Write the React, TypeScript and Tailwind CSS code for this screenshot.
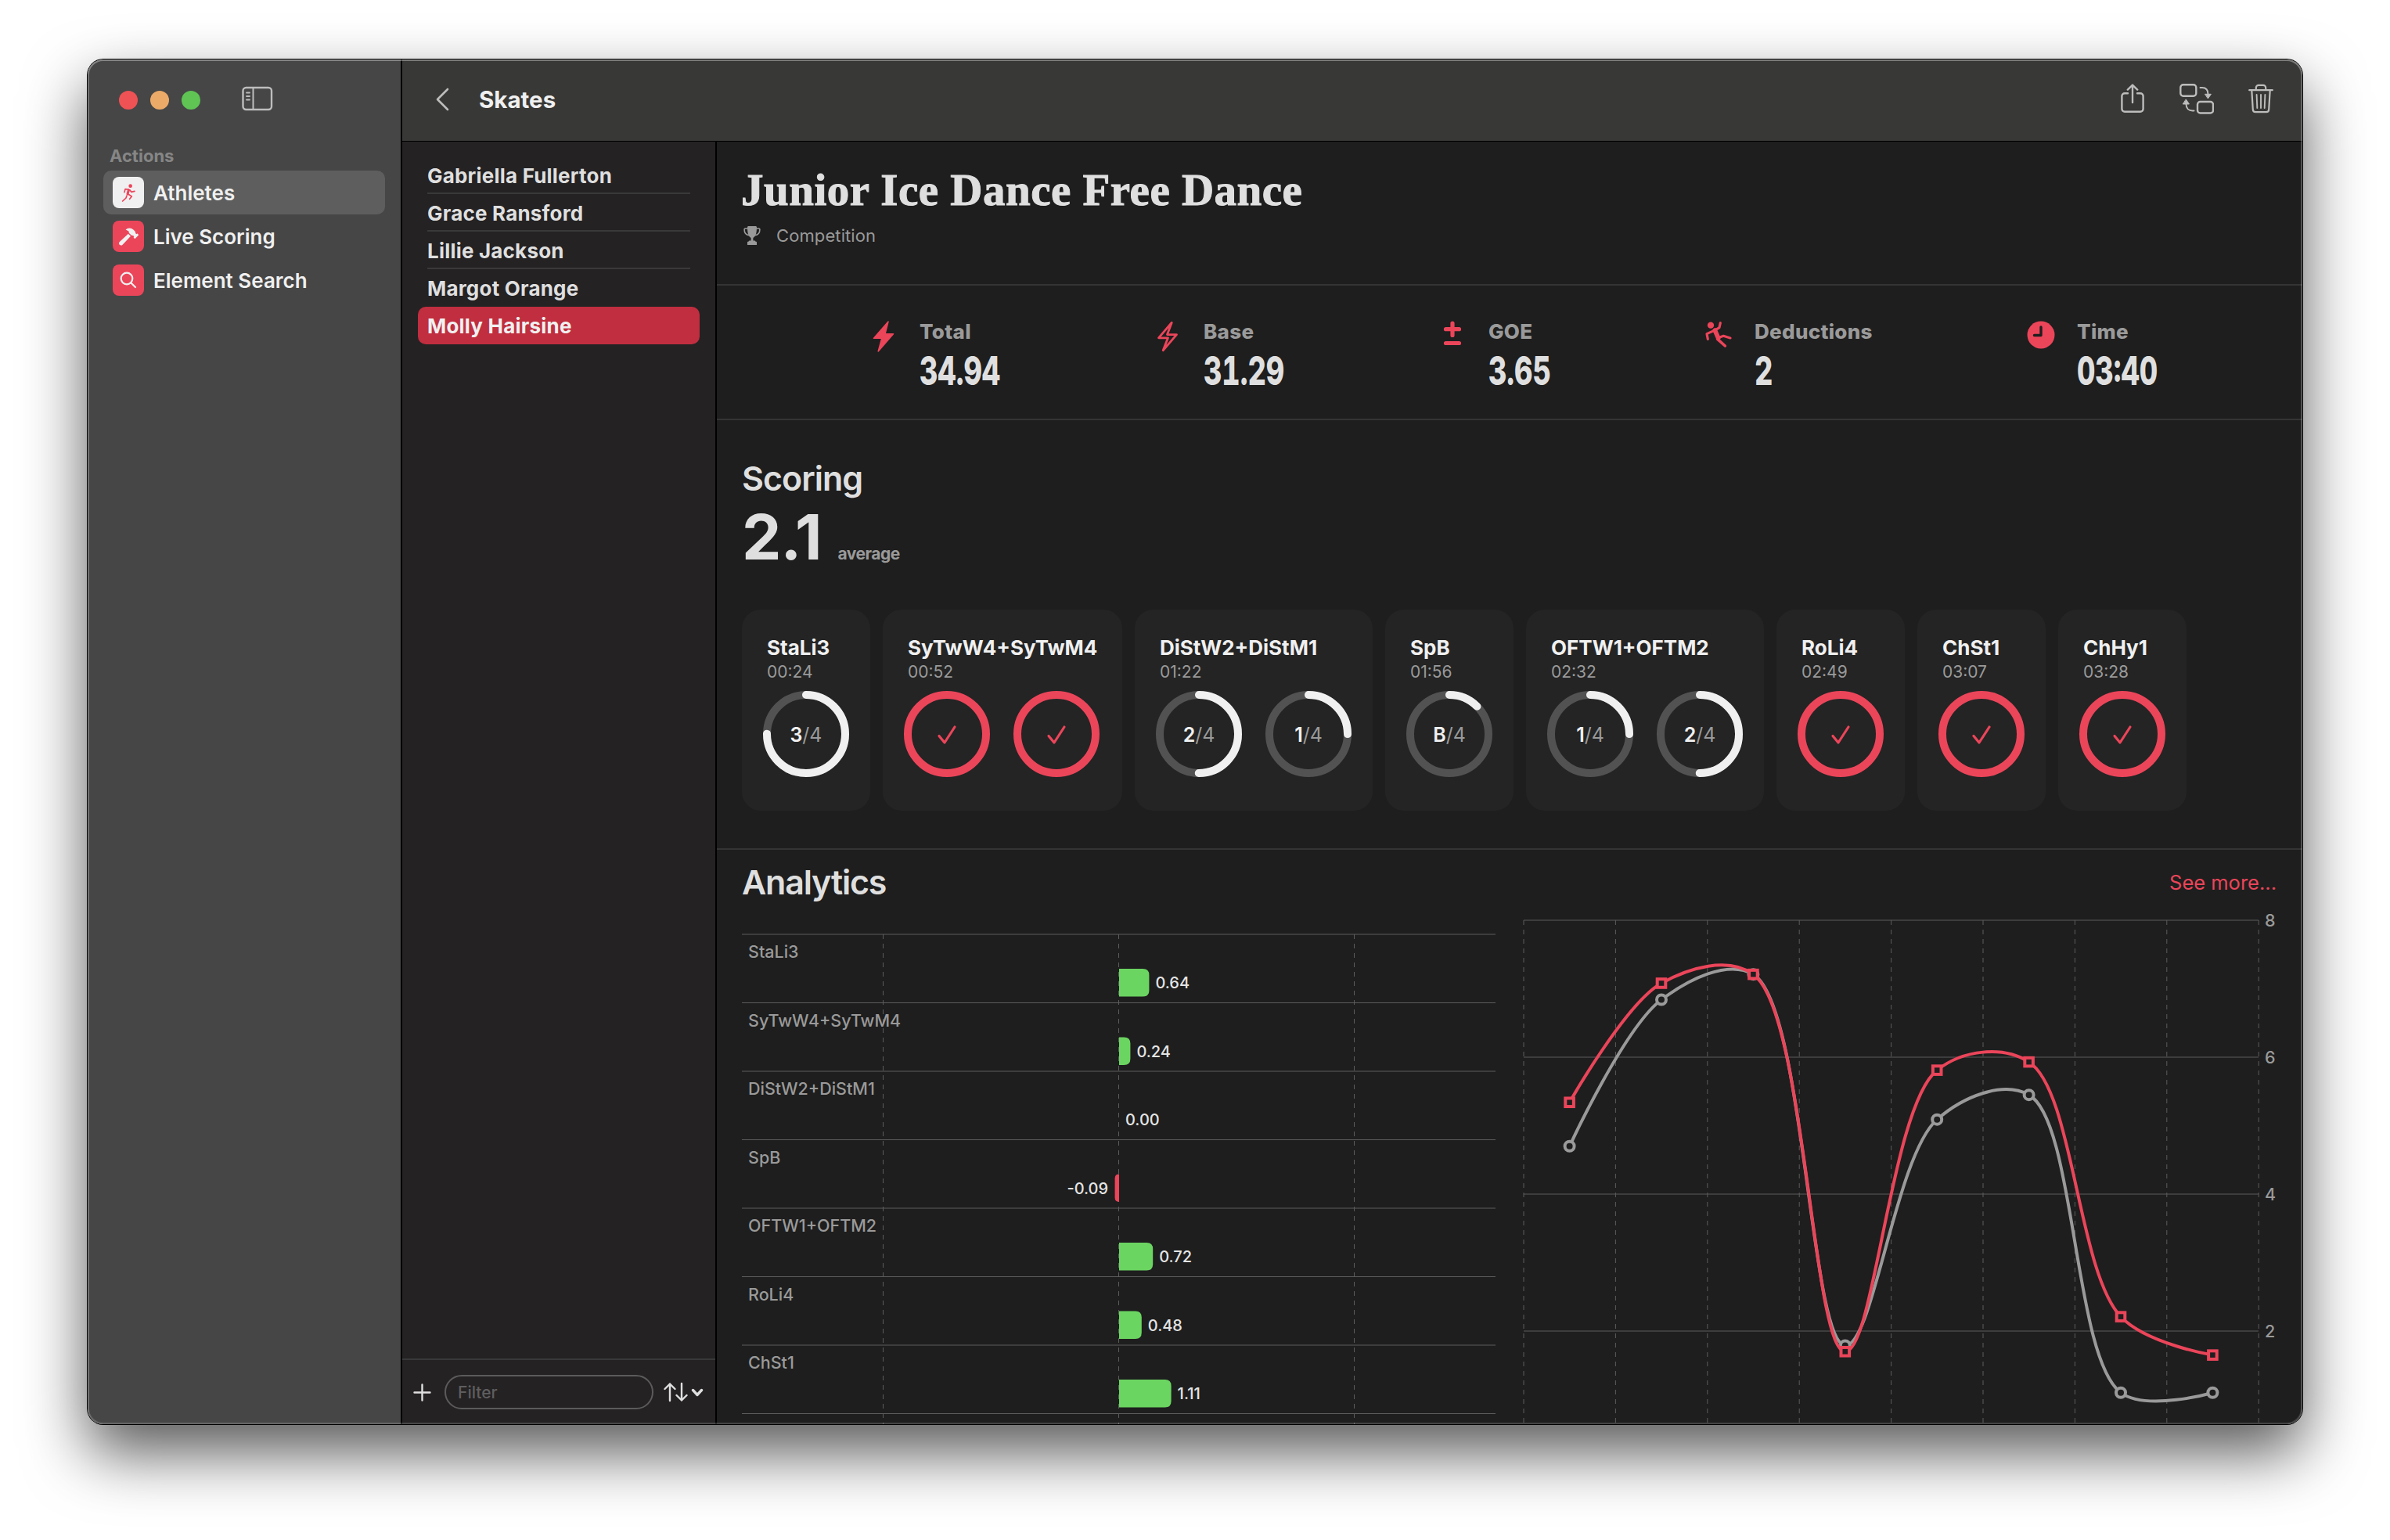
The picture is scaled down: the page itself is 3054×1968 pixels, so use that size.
import type { ReactNode } from 'react'
import { FaHammer } from 'react-icons/fa'

type Ring = { score: string; fraction: number }

const athletes = [
  'Gabriella Fullerton',
  'Grace Ransford',
  'Lillie Jackson',
  'Margot Orange',
  'Molly Hairsine',
]

const elements: { name: string; time: string; width: string; rings: Ring[] }[] = [
  { name: 'StaLi3', time: '00:24', width: 'w-[164px]', rings: [{ score: '3', fraction: 0.75 }] },
  { name: 'SyTwW4+SyTwM4', time: '00:52', width: 'w-[306px]', rings: [{ score: '4', fraction: 1 }, { score: '4', fraction: 1 }] },
  { name: 'DiStW2+DiStM1', time: '01:22', width: 'w-[304px]', rings: [{ score: '2', fraction: 0.5 }, { score: '1', fraction: 0.25 }] },
  { name: 'SpB', time: '01:56', width: 'w-[164px]', rings: [{ score: 'B', fraction: 0.125 }] },
  { name: 'OFTW1+OFTM2', time: '02:32', width: 'w-[304px]', rings: [{ score: '1', fraction: 0.25 }, { score: '2', fraction: 0.5 }] },
  { name: 'RoLi4', time: '02:49', width: 'w-[164px]', rings: [{ score: '4', fraction: 1 }] },
  { name: 'ChSt1', time: '03:07', width: 'w-[164px]', rings: [{ score: '4', fraction: 1 }] },
  { name: 'ChHy1', time: '03:28', width: 'w-[164px]', rings: [{ score: '4', fraction: 1 }] },
]

const goe = [
  { name: 'StaLi3', value: 0.64 },
  { name: 'SyTwW4+SyTwM4', value: 0.24 },
  { name: 'DiStW2+DiStM1', value: 0 },
  { name: 'SpB', value: -0.09 },
  { name: 'OFTW1+OFTM2', value: 0.72 },
  { name: 'RoLi4', value: 0.48 },
  { name: 'ChSt1', value: 1.11 },
]

const totalScores = [5.34, 7.08, 7.21, 1.7, 5.81, 5.93, 2.21, 1.65]
const baseScores = [4.7, 6.84, 7.21, 1.79, 5.09, 5.45, 1.1, 1.1]

/* ---------- icons ---------- */

const SidebarIcon = () => (
  <svg width="40" height="32" viewBox="0 0 40 32" fill="none" stroke="#bdbdbd" strokeWidth="2">
    <rect x="1.5" y="2" width="36.5" height="28" rx="4" strokeWidth="2.4" />
    <path d="M14.5 2v28" />
    <path d="M6 8.5h4M6 13h4M6 17.5h4" strokeWidth="1.8" strokeLinecap="round" />
  </svg>
)

const RunnerIcon = () => (
  <svg width="20" height="25" viewBox="190 520 60 75" fill="none" stroke="currentColor" strokeWidth="5" strokeLinecap="round" strokeLinejoin="round">
    <circle cx="228" cy="531" r="7" fill="currentColor" stroke="none" />
    <path d="M221 544l-13-1-3 12M225 546l7 8 12-3" />
    <path d="M221 547l-4 15" strokeWidth="9" />
    <path d="M219 562l14 9-8 10M214 568l-3 9-13 12" />
  </svg>
)

const ShareIcon = () => (
  <svg width="30" height="38" viewBox="0 0 30 38" fill="none" stroke="#bdbdbd" strokeWidth="2.4" strokeLinecap="round" strokeLinejoin="round">
    <path d="M9 12.2H5a3.6 3.6 0 0 0-3.6 3.6v16.4a3.6 3.6 0 0 0 3.6 3.6h20a3.6 3.6 0 0 0 3.6-3.6V15.8a3.6 3.6 0 0 0-3.6-3.6h-4" />
    <path d="M15 24V2M8.8 7.6 15 1.6l6.2 6" />
  </svg>
)

const SwapIcon = () => (
  <svg width="44" height="39" viewBox="0 0 44 39" fill="none" stroke="#bdbdbd" strokeWidth="2.4" strokeLinecap="round">
    <rect x="1.3" y="1.3" width="20" height="14.5" rx="3.5" />
    <rect x="23" y="23" width="20" height="14.5" rx="3.5" />
    <path d="M26.5 5h2.5c4.5 0 7.5 3 7.5 8.5" strokeWidth="2" />
    <path d="M32.8 13.3h7.6l-3.8 5.4z" fill="#bdbdbd" strokeWidth="1" strokeLinejoin="round" />
    <path d="M18.5 34.5h-2c-4.5 0-8-3-8-8.5" strokeWidth="2" />
    <path d="M4.6 26h7.8l-3.9-5.8z" fill="#bdbdbd" strokeWidth="1" strokeLinejoin="round" />
  </svg>
)

const TrashIcon = () => (
  <svg width="32" height="38" viewBox="0 0 32 38" fill="none" stroke="#bdbdbd" strokeWidth="2.2" strokeLinecap="round" strokeLinejoin="round">
    <path d="M1.2 8.2h29.6" />
    <path d="M9.8 8V5a3.2 3.2 0 0 1 3.2-3.2h6A3.2 3.2 0 0 1 22.2 5v3" />
    <path d="M4.3 8.4 5.8 33a3.3 3.3 0 0 0 3.3 3.2h13.8a3.3 3.3 0 0 0 3.3-3.2l1.5-24.6" />
    <path d="M10.6 14l.7 17M16 14v17M21.4 14l-.7 17" strokeWidth="1.9" />
  </svg>
)

const TrophyIcon = () => (
  <svg width="22" height="25" viewBox="0 0 22 25" fill="#9a9a9a">
    <path d="M5 1.5C5 .6 5.6 0 6.5 0h9c.9 0 1.5.6 1.5 1.5 0 6.5-1 11.5-4.6 13.5v3.5h1.4c.9 0 1.5.5 1.7 1.3H16c.6 0 1 .4 1 1V24H5v-3.200c0-.6.4-1 1-1h.5c.2-.8.8-1.300 1.700-1.300h1.400V15C6 13 5 8 5 1.500z" />
    <path d="M5.500 3H2.300c-.8 0-1.200.5-1.200 1.200 0 4 2.400 7 6.400 7.600M16.500 3h3.200c.8 0 1.200.5 1.200 1.200 0 4-2.400 7-6.400 7.600" fill="none" stroke="#9a9a9a" strokeWidth="1.6" />
  </svg>
)

const BoltIcon = () => (
  <svg width="28" height="40" viewBox="0 0 28 40" fill="#eb455a" stroke="#eb455a" strokeWidth="1.5" strokeLinejoin="round">
    <path d="M20 1 1.5 22.2h10.3L7.2 39 26.5 16.8H16z" />
  </svg>
)

const BoltOutlineIcon = () => (
  <svg width="28" height="40" viewBox="0 0 28 40" fill="none" stroke="#eb455a" strokeWidth="2.8" strokeLinejoin="round">
    <path d="M19.3 2.2 2.5 21.8h12L8.2 37.8 25.5 17.6h-12z" />
  </svg>
)

const PlusMinusIcon = () => (
  <svg width="24" height="32" viewBox="0 0 24 32" fill="none" stroke="#eb455a" strokeWidth="5.2" strokeLinecap="round">
    <path d="M12 3v15.5M3.5 10.7h17M3.5 28.5h17" />
  </svg>
)

const FallingIcon = () => (
  <svg width="36" height="36" viewBox="54 180 108 108" fill="none" stroke="#eb455a" strokeWidth="9.5" strokeLinecap="round" strokeLinejoin="round">
    <circle cx="78" cy="197" r="12.5" fill="#eb455a" stroke="none" />
    <path d="M115 188l-4 18-13 8-35 16 4 20" />
    <path d="M94 216l13 30" strokeWidth="17" />
    <path d="M104 250l29 26" strokeWidth="11" />
    <path d="M106 245l21-7 26 8" />
  </svg>
)

const ClockIcon = () => (
  <svg width="36" height="36" viewBox="0 0 36 36">
    <circle cx="18" cy="18" r="17.5" fill="#eb455a" />
    <path d="M18 8v10.5H9.5" fill="none" stroke="#1e1e1e" strokeWidth="3.4" strokeLinecap="round" strokeLinejoin="round" />
  </svg>
)

/* ---------- sidebar ---------- */

const NavItem = ({ label, icon, active }: { label: string; icon: ReactNode; active?: boolean }) => (
  <div className={`flex h-14 items-center rounded-[10px] pl-3 ${active ? 'bg-[#5e5e5e]' : ''}`}>
    <div className={`flex h-10 w-10 items-center justify-center rounded-lg ${active ? 'bg-[#f0f0f0] text-[#eb455a]' : 'bg-[#eb455a] text-[#f0f0f0]'}`}>
      {icon}
    </div>
    <span className="ml-3 text-[26px] font-semibold text-[#f0f0f0]">{label}</span>
  </div>
)

const Sidebar = () => (
  <aside className="w-[402px] shrink-0 border-r-2 border-black bg-[#464646]">
    <div className="flex h-[104px] items-center gap-4 pl-10">
      <div className="h-6 w-6 rounded-full bg-[#ee5254]" />
      <div className="h-6 w-6 rounded-full bg-[#ebaa68]" />
      <div className="h-6 w-6 rounded-full bg-[#5fc454]" />
      <div className="-mt-1 ml-[37px]">
        <SidebarIcon />
      </div>
    </div>
    <div className="mt-[5px] pl-7 text-[22px] font-bold leading-7 text-[#868686]">Actions</div>
    <nav className="mt-[5px] px-5">
      <NavItem label="Athletes" active icon={<RunnerIcon />} />
      <NavItem label="Live Scoring" icon={<FaHammer size={25} />} />
      <NavItem
        label="Element Search"
        icon={
          <svg width="22" height="22" viewBox="0 0 22 22" fill="none" stroke="currentColor" strokeWidth="2.2" strokeLinecap="round">
            <circle cx="9" cy="9" r="7.3" />
            <path d="M14.5 14.5l5.5 5.5" />
          </svg>
        }
      />
    </nav>
  </aside>
)

/* ---------- athlete list ---------- */

const AthleteList = () => (
  <div className="flex w-[402px] shrink-0 flex-col border-r-2 border-black bg-[#242223]">
    <div className="mt-[19px] px-5">
      {athletes.map((name, i) => (
        <div
          key={name}
          className={`h-12 px-3 text-[26px] font-bold leading-[50px] tracking-[0.2px] ${i === 4 ? 'rounded-[10px] bg-[#c02e3f] text-[#f0f0f0]' : 'text-[#dfdfdf]'}`}
        >
          <div className={`h-12 ${i < 3 ? 'border-b-2 border-[#3a393a]' : ''}`}>{name}</div>
        </div>
      ))}
    </div>
    <div className="mt-auto flex h-[84px] items-center border-t-2 border-[#39383a] pl-[14px]">
      <svg width="23" height="23" viewBox="0 0 23 23" stroke="#dfdfdf" strokeWidth="2.4" strokeLinecap="round">
        <path d="M11.5 1.5v20M1.5 11.5h20" />
      </svg>
      <div className="ml-[17px] h-11 w-[267px] rounded-full border-2 border-[#5c5b5b] pl-[15px] text-[21px] font-medium leading-[41px] text-[#5f5e5f]">
        Filter
      </div>
      <svg className="ml-3" width="52" height="26" viewBox="0 0 52 26" fill="none" stroke="#dfdfdf" strokeWidth="2.4" strokeLinecap="round" strokeLinejoin="round">
        <path d="M9 24V2.5M2.5 9 9 2.5 15.5 9" />
        <path d="M24 2v21.5M17.5 17l6.5 6.5L30.5 17" />
        <path d="M38.5 10.5l5.5 6 5.5-6" strokeWidth="3.4" />
      </svg>
    </div>
  </div>
)

/* ---------- stats ---------- */

const Stat = ({ label, value, icon, width }: { label: string; value: string; icon: ReactNode; width: string }) => (
  <div className={`flex ${width}`}>
    <div className="mt-[3px] flex w-9 justify-center">{icon}</div>
    <div className="ml-7">
      <div className="pt-px text-[26px] font-extrabold leading-8 tracking-[0.3px] text-[#9a9a9a]">{label}</div>
      <div className="mt-[6px] w-[160px] origin-left scale-x-[0.71] text-[51px] font-extrabold tabular-nums leading-[56px] text-[#dfdfdf]">
        {value}
      </div>
    </div>
  </div>
)

/* ---------- scoring ---------- */

const ScoreRing = ({ score, fraction }: Ring) => {
  const full = fraction === 1
  const length = 2 * Math.PI * 50

  return (
    <div className="relative h-[110px] w-[110px]">
      <svg className="-rotate-90" width="110" height="110" fill="none" strokeWidth="10">
        <circle cx="55" cy="55" r="50" stroke={full ? '#eb455a' : '#525252'} />
        {!full && (
          <circle cx="55" cy="55" r="50" stroke="#f0f0f0" strokeLinecap="round" strokeDasharray={`${length * fraction} ${length}`} />
        )}
      </svg>
      <div className="absolute inset-0 flex items-center justify-center pt-px text-[25px] leading-8">
        {full ? (
          <svg width="26" height="26" viewBox="0 0 26 26" fill="none" stroke="#eb455a" strokeWidth="3.2" strokeLinecap="round" strokeLinejoin="round">
            <path d="M3 14.5l7 8.5L23 3" />
          </svg>
        ) : (
          <>
            <span className="font-semibold text-[#f0f0f0]">{score}</span>
            <span className="text-[#9a9a9a]">/4</span>
          </>
        )}
      </div>
    </div>
  )
}

/* ---------- charts ---------- */

const GoeChart = () => (
  <svg width="964" height="667" fontFamily="Inter, sans-serif">
    {[0, 1, 2, 3, 4, 5, 6, 7].map((i) => (
      <path key={i} d={`M0 ${41 + i * 87.5}H963`} stroke="#5c5c5c" />
    ))}
    {[180.5, 481.5, 782.5].map((x) => (
      <path key={x} d={`M${x} 41V667`} stroke="#5c5c5c" strokeDasharray="6 6" />
    ))}
    {goe.map(({ name, value }, i) => {
      const top = 85 + i * 87.5
      const w = Math.abs(value) * 60
      const r = Math.min(8, w)
      const dir = value < 0 ? -1 : 1
      return (
        <g key={name}>
          <text x="8" y={71 + i * 87.5} fontSize="21.5" fontWeight="450" fill="#9a9a9a">{name}</text>
          {w > 0 && (
            <path
              d={`M482 ${top}h${dir * (w - r)}q${dir * r} 0 ${dir * r} ${r}v${35.5 - 2 * r}q0 ${r} ${-dir * r} ${r}h${-dir * (w - r)}z`}
              fill={value < 0 ? '#eb455a' : '#6bd561'}
            />
          )}
          <text
            x={482 + dir * w + (value < 0 ? -8.5 : 8)}
            y={110 + i * 87.5}
            fontSize="20"
            fontWeight="500"
            fill="#e4e4e4"
            textAnchor={value < 0 ? 'end' : 'start'}
          >
            {value.toFixed(2)}
          </text>
        </g>
      )
    })}
  </svg>
)

// centripetal Catmull-Rom through every point
const smoothPath = (pts: number[][]) => {
  let d = `M${pts[0][0]} ${pts[0][1]}`
  for (let i = 0; i < pts.length - 1; i++) {
    const p0 = pts[i - 1] ?? pts[i]
    const p1 = pts[i]
    const p2 = pts[i + 1]
    const p3 = pts[i + 2] ?? p2
    const dist = (a: number[], b: number[]) => Math.sqrt(Math.hypot(a[0] - b[0], a[1] - b[1]))
    const d1 = dist(p0, p1)
    const d2 = dist(p1, p2)
    const d3 = dist(p2, p3)
    const c1 = p1.map((v, k) =>
      d1 === 0 ? v : (d1 * d1 * p2[k] - d2 * d2 * p0[k] + (2 * d1 * d1 + 3 * d1 * d2 + d2 * d2) * v) / (3 * d1 * (d1 + d2)),
    )
    const c2 = p2.map((v, k) =>
      d3 === 0 ? v : (d3 * d3 * p1[k] - d2 * d2 * p3[k] + (2 * d3 * d3 + 3 * d3 * d2 + d2 * d2) * v) / (3 * d3 * (d3 + d2)),
    )
    d += `C${c1.join(' ')} ${c2.join(' ')} ${p2.join(' ')}`
  }
  return d
}

const ScoreChart = () => {
  const toPoints = (values: number[]) => values.map((v, i) => [65.6 + i * 117.4, 23 + (8 - v) * 87.5])
  const base = toPoints(baseScores)
  const total = toPoints(totalScores)

  return (
    <svg width="990" height="667" fontFamily="Inter, sans-serif" fill="none">
      {[8, 6, 4, 2].map((v) => (
        <g key={v}>
          <path d={`M7 ${23 + (8 - v) * 87.5}H946`} stroke="#5c5c5c" />
          <text x="954" y={31 + (8 - v) * 87.5} fontSize="21.5" fontWeight="450" fill="#9a9a9a">{v}</text>
        </g>
      ))}
      {[0, 1, 2, 3, 4, 5, 6, 7, 8].map((i) => (
        <path key={i} d={`M${7 + i * 117.4} 23V667`} stroke="#5c5c5c" strokeDasharray="6 6" />
      ))}
      <path d={smoothPath(base)} stroke="#9a9a9a" strokeWidth="4" />
      {base.map(([x, y]) => (
        <circle key={x} cx={x} cy={y} r="6" fill="#1e1e1e" stroke="#9a9a9a" strokeWidth="4" />
      ))}
      <path d={smoothPath(total)} stroke="#eb455a" strokeWidth="4" />
      {total.map(([x, y]) => (
        <rect key={x} x={x - 5.3} y={y - 5.3} width="10.6" height="10.6" fill="#1e1e1e" stroke="#eb455a" strokeWidth="4" />
      ))}
    </svg>
  )
}

/* ---------- page ---------- */

const Detail = () => (
  <main className="flex min-w-0 flex-1 flex-col bg-[#1e1e1e]">
    <section className="h-[184px] shrink-0 border-b-2 border-[#343434] pl-[31px] pt-[30px]">
      <h1 className="font-['Liberation_Serif',serif] text-[57px] font-bold leading-[64px] tracking-[0.5px] text-[#dfdfdf] [-webkit-text-stroke:1px_#dfdfdf]">
        Junior Ice Dance Free Dance
      </h1>
      <div className="mt-3 flex items-center pl-[3px]">
        <TrophyIcon />
        <span className="ml-5 text-[22px] leading-7 tracking-[0.1px] text-[#9a9a9a]">Competition</span>
      </div>
    </section>

    <section className="flex h-[172px] shrink-0 border-b-2 border-[#343434] pl-[195px] pt-[42px]">
      <Stat label="Total" value="34.94" icon={<BoltIcon />} width="w-[363px]" />
      <Stat label="Base" value="31.29" icon={<BoltOutlineIcon />} width="w-[364px]" />
      <Stat label="GOE" value="3.65" icon={<PlusMinusIcon />} width="w-[340px]" />
      <Stat label="Deductions" value="2" icon={<FallingIcon />} width="w-[412px]" />
      <Stat label="Time" value="03:40" icon={<ClockIcon />} width="w-[240px]" />
    </section>

    <section className="h-[549px] shrink-0 border-b-2 border-[#343434] pl-8 pt-12">
      <h2 className="text-[43px] font-semibold leading-[52px] tracking-[-1px] text-[#dfdfdf]">Scoring</h2>
      <div className="mt-[9px] flex h-20 items-baseline">
        <span className="text-[80px] font-bold leading-[80px] tracking-[-1px] text-[#dfdfdf]">2.1</span>
        <span className="ml-[21px] text-[21px] font-bold tracking-[-0.5px] text-[#9a9a9a]">average</span>
      </div>
      <div className="mt-[53px] flex gap-4">
        {elements.map((el) => (
          <div key={el.name} className={`h-[257px] shrink-0 rounded-3xl bg-[#242424] pt-[33px] ${el.width}`}>
            <div className="pl-8 text-[26px] font-bold leading-8 text-[#f0f0f0]">{el.name}</div>
            <div className="mt-px pl-8 text-[21px] leading-7 text-[#9a9a9a]">{el.time}</div>
            <div className="mt-[10px] flex gap-[30px] pl-[27px]">
              {el.rings.map((ring, i) => (
                <ScoreRing key={i} {...ring} />
              ))}
            </div>
          </div>
        ))}
      </div>
    </section>

    <section className="min-h-0 flex-1 overflow-hidden pl-8 pt-[15px]">
      <div className="flex items-center justify-between pr-[33px]">
        <h2 className="text-[43px] font-semibold leading-[52px] tracking-[-1.2px] text-[#dfdfdf]">Analytics</h2>
        <span className="pt-[3px] text-[25.5px] text-[#eb455a]">See more...</span>
      </div>
      <div className="flex gap-7">
        <GoeChart />
        <ScoreChart />
      </div>
    </section>
  </main>
)

export default function App() {
  return (
    <div className="h-[1968px] w-[3054px] overflow-hidden bg-white pl-[112px] pt-[76px] font-['Inter',sans-serif]">
      <div className="relative flex h-[1744px] w-[2830px] overflow-hidden rounded-[20px] shadow-[0_0_0_1px_#000,0_36px_80px_rgba(0,0,0,0.66)]">
        <Sidebar />
        <div className="flex min-w-0 flex-1 flex-col">
          <header className="flex h-[105px] shrink-0 items-center border-b border-black bg-[#383836] pl-[43px] pr-[37px]">
            <svg className="-mt-0.5" width="17" height="30" viewBox="0 0 17 30" fill="none" stroke="#bdbdbd" strokeWidth="2.6" strokeLinecap="round" strokeLinejoin="round">
              <path d="M15 2 2 15l13 13" />
            </svg>
            <span className="-mt-px ml-[38px] text-[29.5px] font-bold text-[#f0f0f0]">Skates</span>
            <div className="-mt-1 ml-auto flex items-center">
              <ShareIcon />
              <div className="ml-[45px]"><SwapIcon /></div>
              <div className="ml-11"><TrashIcon /></div>
            </div>
          </header>
          <div className="flex min-h-0 flex-1">
            <AthleteList />
            <Detail />
          </div>
        </div>
        {/* light rim over the window edge */}
        <div className="pointer-events-none absolute inset-0 rounded-[20px] shadow-[inset_0_0_0_2px_rgba(255,255,255,0.17),inset_0_1px_0_1px_rgba(255,255,255,0.2)]" />
      </div>
    </div>
  )
}
